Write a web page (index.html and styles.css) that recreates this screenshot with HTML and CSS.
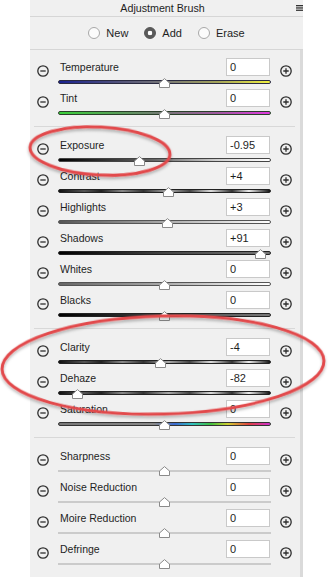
FILE: index.html
```html
<!DOCTYPE html>
<html lang="en">
<head>
    <meta charset="UTF-8">
    <title>Adjustment Brush</title>
    <link rel="stylesheet" href="styles.css">
</head>
<body>

<!-- Shared icons -->
<svg class="defs" width="0" height="0">
    <symbol id="minus" viewBox="0 0 12 12">
        <circle cx="6" cy="6" r="5.2" fill="none" stroke="#2e2e2e" stroke-width="1.3"/>
        <path d="M3.3 6h5.4" stroke="#2e2e2e" stroke-width="1.3"/>
    </symbol>
    <symbol id="plus" viewBox="0 0 12 12">
        <circle cx="6" cy="6" r="5.2" fill="none" stroke="#2e2e2e" stroke-width="1.3"/>
        <path d="M3.3 6h5.4M6 3.3v5.4" stroke="#2e2e2e" stroke-width="1.3"/>
    </symbol>
    <symbol id="thumb" viewBox="0 0 11 10">
        <path d="M5.5 .6 10.5 5v4.5H.5V5z" fill="#fff" stroke="#8a8a8a"/>
    </symbol>
</svg>

<div class="panel">
    <!-- Title -->
    <div class="panel-title">
        Adjustment Brush
        <svg class="menu" width="7" height="6" viewBox="0 0 7 6">
            <path d="M0 .5h7M0 2.2h7M0 3.9h7M0 5.6h7" stroke="#333" stroke-width="1"/>
        </svg>
    </div>

    <!-- Brush mode -->
    <div class="modes">
        <span class="mode"><span class="radio"></span>New</span>
        <span class="mode"><span class="radio checked"></span>Add</span>
        <span class="mode"><span class="radio"></span>Erase</span>
    </div>

    <div class="sliders">
        <!-- White balance -->
        <div class="section">
            <div class="row">
                <svg class="btn"><use href="#minus"/></svg>
                <div class="main">
                    <div class="top"><span class="label">Temperature</span><span class="value">0</span></div>
                    <div class="track temperature"><svg class="thumb" style="left: 50%"><use href="#thumb"/></svg></div>
                </div>
                <svg class="btn"><use href="#plus"/></svg>
            </div>
            <div class="row">
                <svg class="btn"><use href="#minus"/></svg>
                <div class="main">
                    <div class="top"><span class="label">Tint</span><span class="value">0</span></div>
                    <div class="track tint"><svg class="thumb" style="left: 50%"><use href="#thumb"/></svg></div>
                </div>
                <svg class="btn"><use href="#plus"/></svg>
            </div>
        </div>
        <div class="divider"></div>

        <!-- Tone -->
        <div class="section">
            <div class="row">
                <svg class="btn"><use href="#minus"/></svg>
                <div class="main">
                    <div class="top"><span class="label">Exposure</span><span class="value">-0.95</span></div>
                    <div class="track exposure"><svg class="thumb" style="left: 38%"><use href="#thumb"/></svg></div>
                </div>
                <svg class="btn"><use href="#plus"/></svg>
            </div>
            <div class="row">
                <svg class="btn"><use href="#minus"/></svg>
                <div class="main">
                    <div class="top"><span class="label">Contrast</span><span class="value">+4</span></div>
                    <div class="track contrast"><svg class="thumb" style="left: 52%"><use href="#thumb"/></svg></div>
                </div>
                <svg class="btn"><use href="#plus"/></svg>
            </div>
            <div class="row">
                <svg class="btn"><use href="#minus"/></svg>
                <div class="main">
                    <div class="top"><span class="label">Highlights</span><span class="value">+3</span></div>
                    <div class="track highlights"><svg class="thumb" style="left: 51.5%"><use href="#thumb"/></svg></div>
                </div>
                <svg class="btn"><use href="#plus"/></svg>
            </div>
            <div class="row">
                <svg class="btn"><use href="#minus"/></svg>
                <div class="main">
                    <div class="top"><span class="label">Shadows</span><span class="value">+91</span></div>
                    <div class="track shadows"><svg class="thumb" style="left: 95.5%"><use href="#thumb"/></svg></div>
                </div>
                <svg class="btn"><use href="#plus"/></svg>
            </div>
            <div class="row">
                <svg class="btn"><use href="#minus"/></svg>
                <div class="main">
                    <div class="top"><span class="label">Whites</span><span class="value">0</span></div>
                    <div class="track whites"><svg class="thumb" style="left: 50%"><use href="#thumb"/></svg></div>
                </div>
                <svg class="btn"><use href="#plus"/></svg>
            </div>
            <div class="row">
                <svg class="btn"><use href="#minus"/></svg>
                <div class="main">
                    <div class="top"><span class="label">Blacks</span><span class="value">0</span></div>
                    <div class="track blacks"><svg class="thumb" style="left: 50%"><use href="#thumb"/></svg></div>
                </div>
                <svg class="btn"><use href="#plus"/></svg>
            </div>
        </div>
        <div class="divider"></div>

        <!-- Presence -->
        <div class="section">
            <div class="row">
                <svg class="btn"><use href="#minus"/></svg>
                <div class="main">
                    <div class="top"><span class="label">Clarity</span><span class="value">-4</span></div>
                    <div class="track clarity"><svg class="thumb" style="left: 48%"><use href="#thumb"/></svg></div>
                </div>
                <svg class="btn"><use href="#plus"/></svg>
            </div>
            <div class="row">
                <svg class="btn"><use href="#minus"/></svg>
                <div class="main">
                    <div class="top"><span class="label">Dehaze</span><span class="value">-82</span></div>
                    <div class="track clarity"><svg class="thumb" style="left: 9%"><use href="#thumb"/></svg></div>
                </div>
                <svg class="btn"><use href="#plus"/></svg>
            </div>
            <div class="row">
                <svg class="btn"><use href="#minus"/></svg>
                <div class="main">
                    <div class="top"><span class="label">Saturation</span><span class="value">0</span></div>
                    <div class="track saturation"><svg class="thumb" style="left: 50%"><use href="#thumb"/></svg></div>
                </div>
                <svg class="btn"><use href="#plus"/></svg>
            </div>
        </div>
        <div class="divider"></div>

        <!-- Detail -->
        <div class="section">
            <div class="row">
                <svg class="btn"><use href="#minus"/></svg>
                <div class="main">
                    <div class="top"><span class="label">Sharpness</span><span class="value">0</span></div>
                    <div class="track plain"><svg class="thumb" style="left: 50%"><use href="#thumb"/></svg></div>
                </div>
                <svg class="btn"><use href="#plus"/></svg>
            </div>
            <div class="row">
                <svg class="btn"><use href="#minus"/></svg>
                <div class="main">
                    <div class="top"><span class="label">Noise Reduction</span><span class="value">0</span></div>
                    <div class="track plain"><svg class="thumb" style="left: 50%"><use href="#thumb"/></svg></div>
                </div>
                <svg class="btn"><use href="#plus"/></svg>
            </div>
            <div class="row">
                <svg class="btn"><use href="#minus"/></svg>
                <div class="main">
                    <div class="top"><span class="label">Moire Reduction</span><span class="value">0</span></div>
                    <div class="track plain"><svg class="thumb" style="left: 50%"><use href="#thumb"/></svg></div>
                </div>
                <svg class="btn"><use href="#plus"/></svg>
            </div>
            <div class="row">
                <svg class="btn"><use href="#minus"/></svg>
                <div class="main">
                    <div class="top"><span class="label">Defringe</span><span class="value">0</span></div>
                    <div class="track plain"><svg class="thumb" style="left: 50%"><use href="#thumb"/></svg></div>
                </div>
                <svg class="btn"><use href="#plus"/></svg>
            </div>
        </div>
    </div>
</div>

<!-- Red annotation marks -->
<svg class="marks" width="329" height="577" viewBox="0 0 329 577">
    <defs>
        <filter id="soft" x="-10%" y="-20%" width="120%" height="140%">
            <feDropShadow dx="0" dy="2" stdDeviation="1.5" flood-color="#000" flood-opacity=".3"/>
        </filter>
    </defs>
    <ellipse cx="100" cy="151" rx="70" ry="24" transform="rotate(3 100 151)" fill="none" stroke="#e24a4c" stroke-width="3" filter="url(#soft)"/>
    <ellipse cx="163" cy="365" rx="161" ry="49" transform="rotate(-1.5 163 365)" fill="none" stroke="#e24a4c" stroke-width="3" filter="url(#soft)"/>
</svg>

</body>
</html>
```

FILE: styles.css
```css
/* General Styling */
body {
    margin: 0;
    background: #fff;
    font-family: "Liberation Sans", Arial, sans-serif;
    color: #1e1e1e;
    position: relative;
    height: 577px;
    overflow: hidden;
}

.defs {
    position: absolute;
}

.panel {
    margin-left: 30px;
    width: 273px;
    min-height: 577px;
    background: #f0f0f0;
}

/* Title bar */
.panel-title {
    position: relative;
    height: 16px;
    line-height: 16px;
    font-size: 10.7px;
    text-align: center;
    padding-right: 8px;
    border-bottom: 1px solid #d6d6d6;
}

.menu {
    position: absolute;
    right: 0;
    top: 5px;
}

/* New / Add / Erase */
.modes {
    height: 32px;
    display: flex;
    justify-content: center;
    align-items: center;
    gap: 16px;
    font-size: 11px;
    border-bottom: 1px solid #d6d6d6;
}

.mode {
    display: flex;
    align-items: center;
    gap: 6px;
}

.radio {
    width: 12px;
    height: 12px;
    box-sizing: border-box;
    border-radius: 50%;
    border: 1px solid #a8a8a8;
    background: #fbfbfb;
}

.radio.checked {
    border-color: #555;
    background: radial-gradient(circle, #fff 0 2px, #5a5a5a 2.6px);
}

/* Slider list */
.sliders {
    border-right: 3px solid #dadada;
    min-height: 527px;
}

.section {
    padding: 9px 0 6px;
}

.section:first-child {
    padding-top: 8px;
}

.divider {
    height: 1px;
    margin: 0 5px 0 4px;
    background: #d8d8d8;
}

.row {
    display: flex;
    align-items: center;
    height: 26px;
    margin-bottom: 5px;
    padding-left: 7px;
}

.btn {
    width: 12px;
    height: 12px;
    flex: none;
}

.main {
    width: 213px;
    margin: 0 9px;
}

.top {
    display: flex;
    justify-content: space-between;
    align-items: center;
    height: 18px;
}

.label {
    font-size: 10.5px;
    padding-left: 2px;
}

.value {
    width: 44px;
    height: 18px;
    box-sizing: border-box;
    margin-right: 1px;
    padding-left: 3px;
    border: 1px solid #c9c9c9;
    background: #fff;
    font-size: 11px;
    line-height: 16px;
}

/* Tracks */
.track {
    position: relative;
    height: 4px;
    margin-top: 4px;
    box-sizing: border-box;
    border: 1px solid #3a3a3a;
    border-radius: 2px;
}

.thumb {
    position: absolute;
    top: -3px;
    width: 11px;
    height: 10px;
    margin-left: -5.5px;
}

.track.temperature {
    border-color: #2a2a40;
    background: linear-gradient(to right, #1a2290, #55557a 30%, #777 50%, #a3a35a 75%, #f0f040);
}

.track.tint {
    border-color: #2a402a;
    background: linear-gradient(to right, #3ad03a, #5a9a5a 30%, #777 50%, #a05aa0 75%, #e03ae0);
}

.track.exposure {
    border-color: #444;
    background: linear-gradient(to right, #000, #666 45%, #d0d0d0 75%, #fff);
}

.track.contrast,
.track.clarity {
    border-color: #222;
    background: linear-gradient(to right, #111 0%, #555 12%, #222 20%, #888 30%, #333 40%, #aaa 52%, #444 62%, #ddd 72%, #333 82%, #eee 90%, #111 100%);
}

.track.highlights {
    border-color: #555;
    background: linear-gradient(to right, #555, #aaa 50%, #fff);
}

.track.shadows,
.track.blacks {
    border-color: #222;
    background: linear-gradient(to right, #000, #444 50%, #777);
}

.track.whites {
    border-color: #555;
    background: linear-gradient(to right, #666, #aaa 50%, #fff);
}

.track.saturation {
    border-color: #333;
    background: linear-gradient(to right, #777, #888 45%, #3a6ad0 55%, #30c0c0 63%, #40c040 72%, #d0d030 80%, #e04040 90%, #d030d0);
}

.track.plain {
    border: none;
    border-radius: 0;
    background: linear-gradient(to bottom, transparent 1px, #cbcbcb 1px, #cbcbcb 3px, transparent 3px);
}

/* Annotations */
.marks {
    position: absolute;
    top: 0;
    left: 0;
    pointer-events: none;
}
```
